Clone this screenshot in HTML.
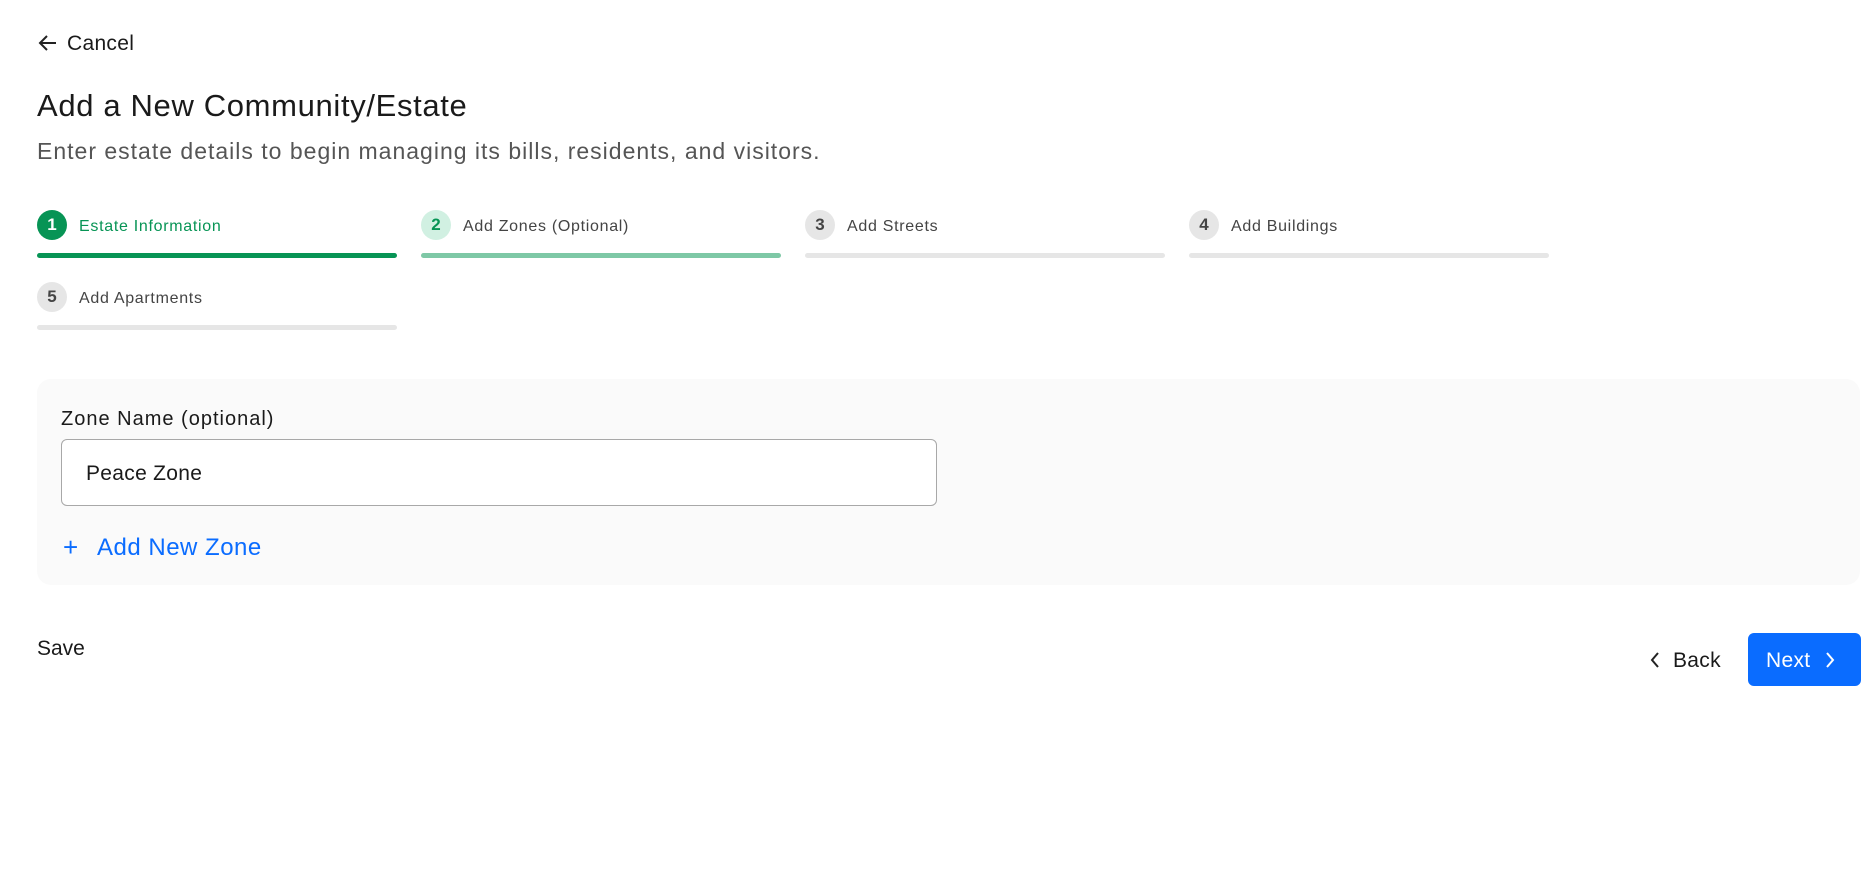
<!DOCTYPE html>
<html><head><style>
body{margin:0;width:1871px;height:888px;background:#fff;font-family:"Liberation Sans",sans-serif;color:#1a1a1a;position:relative;overflow:hidden}
.a{position:absolute;white-space:nowrap}
.circ{position:absolute;width:30px;height:30px;border-radius:50%;font-size:17px;font-weight:bold;text-align:center;line-height:30px}
.bar{position:absolute;height:5px;width:360px;border-radius:3px;background:#e6e6e6}
.lbl{position:absolute;font-size:16px;color:#444;line-height:20px;letter-spacing:0.7px;white-space:nowrap}
</style></head><body>
<svg class="a" style="left:38px;top:34px" width="20" height="18" viewBox="0 0 20 18"><path d="M18 9H2M9 2L2 9l7 7" fill="none" stroke="#222" stroke-width="2"/></svg>
<div class="a" style="left:67px;top:32px;font-size:21px;line-height:24px;letter-spacing:0.3px">Cancel</div>
<div class="a" style="left:37px;top:87px;font-size:31px;line-height:38px;color:#1a1a1a;letter-spacing:0.65px">Add a New Community/Estate</div>
<div class="a" style="left:37px;top:137px;font-size:23px;line-height:28px;color:#555;letter-spacing:1px">Enter estate details to begin managing its bills, residents, and visitors.</div>

<div class="circ" style="left:37px;top:210px;background:#079455;color:#fff">1</div>
<div class="lbl" style="left:79px;top:217px;color:#079455">Estate Information</div>
<div class="bar" style="left:37px;top:253px;background:#079455"></div>

<div class="circ" style="left:421px;top:210px;background:#d1f0e2;color:#079455">2</div>
<div class="lbl" style="left:463px;top:217px">Add Zones (Optional)</div>
<div class="bar" style="left:421px;top:253px;background:#7ec8a6"></div>

<div class="circ" style="left:805px;top:210px;background:#e6e6e6;color:#444">3</div>
<div class="lbl" style="left:847px;top:217px">Add Streets</div>
<div class="bar" style="left:805px;top:253px"></div>

<div class="circ" style="left:1189px;top:210px;background:#e6e6e6;color:#444">4</div>
<div class="lbl" style="left:1231px;top:217px">Add Buildings</div>
<div class="bar" style="left:1189px;top:253px"></div>

<div class="circ" style="left:37px;top:282px;background:#e6e6e6;color:#444">5</div>
<div class="lbl" style="left:79px;top:289px">Add Apartments</div>
<div class="bar" style="left:37px;top:325px"></div>

<div class="a" style="left:37px;top:379px;width:1823px;height:206px;background:#fafafa;border-radius:14px"></div>
<div class="a" style="left:61px;top:407px;font-size:20px;line-height:24px;letter-spacing:1px">Zone Name (optional)</div>
<div class="a" style="left:61px;top:439px;width:874px;height:65px;background:#fff;border:1px solid #a8a8a8;border-radius:6px"></div>
<div class="a" style="left:86px;top:461px;font-size:21px;line-height:26px;letter-spacing:0.3px">Peace Zone</div>
<div class="a" style="left:63px;top:532px;font-size:26px;line-height:30px;color:#0a6cff">+</div>
<div class="a" style="left:97px;top:534px;font-size:24px;line-height:28px;color:#0a6cff;letter-spacing:0.5px">Add New Zone</div>

<div class="a" style="left:37px;top:637px;font-size:21px;line-height:24px">Save</div>
<svg class="a" style="left:1648px;top:650px" width="14" height="20" viewBox="0 0 14 20"><path d="M10 3L4 10l6 7" fill="none" stroke="#222" stroke-width="2"/></svg>
<div class="a" style="left:1673px;top:648px;font-size:21px;line-height:26px;letter-spacing:0.3px">Back</div>
<div class="a" style="left:1748px;top:633px;width:113px;height:53px;background:#0a6cff;border-radius:6px"></div>
<div class="a" style="left:1766px;top:648px;font-size:21px;line-height:26px;color:#fff;letter-spacing:0.3px">Next</div>
<svg class="a" style="left:1823px;top:650px" width="14" height="20" viewBox="0 0 14 20"><path d="M4 3l6 7-6 7" fill="none" stroke="#fff" stroke-width="2"/></svg>
</body></html>
